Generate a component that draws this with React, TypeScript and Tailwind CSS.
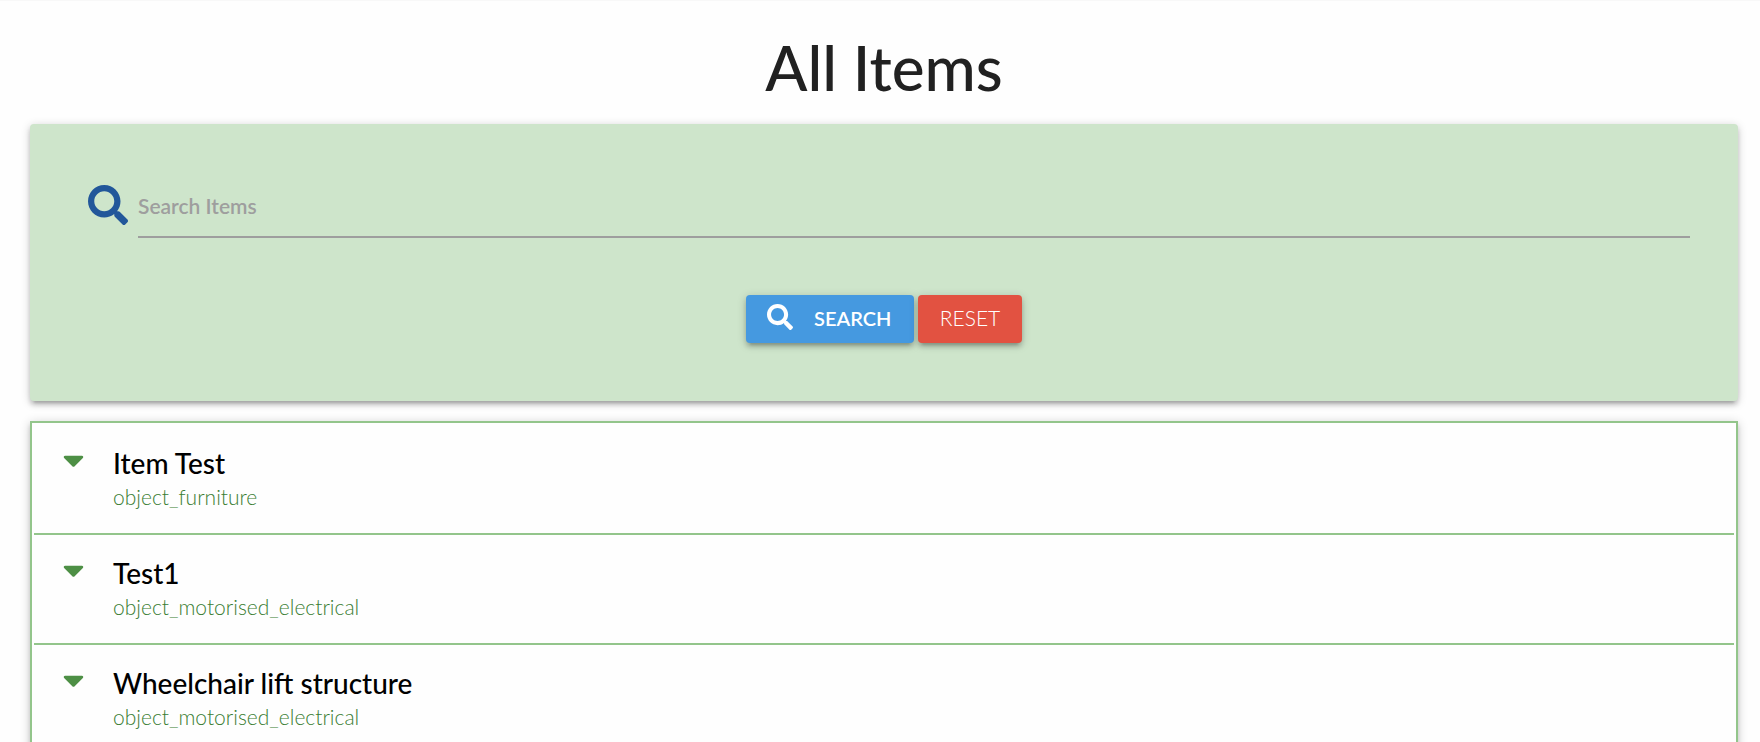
import { FaCaretDown, FaSearch } from "react-icons/fa";

const items = [
  { name: "Item Test", kind: "object_furniture" },
  { name: "Test1", kind: "object_motorised_electrical" },
  { name: "Wheelchair lift structure", kind: "object_motorised_electrical" },
];

const raised =
  "shadow-[0_4px_4px_0_rgba(0,0,0,0.14),0_6px_2px_-4px_rgba(0,0,0,0.12),0_2px_10px_0_rgba(0,0,0,0.2)]";

export default function App() {
  return (
    <div className="h-screen overflow-hidden border-t border-[#f8f8f8] bg-[#fefefe] pr-[22px] pl-[30px] font-['Lato','Open_Sans',sans-serif]">
      <h1 className="pt-[30px] pb-[21px] text-center text-[62px] leading-[72px] font-medium text-[#212121]">
        All Items
      </h1>

      <form
        onSubmit={(e) => e.preventDefault()}
        className={`rounded-[4px] bg-[#cee5cb] px-12 pt-[53px] pb-[58px] ${raised}`}
      >
        <div className="flex items-start pl-[10px]">
          <label htmlFor="search" aria-label="Search Items" className="pt-2 text-[#22579a]">
            <FaSearch size={40} />
          </label>
          <input
            id="search"
            type="text"
            placeholder="Search Items"
            className="ml-[10px] h-[61px] min-w-0 flex-1 border-b-2 border-[#9e9e9e] bg-transparent pb-[2px] text-[21px] font-semibold text-[#212121] outline-none placeholder:text-[#9e9e9e]"
          />
        </div>
        <div className="mt-[57px] flex justify-center gap-1">
          <button
            type="submit"
            className={`flex h-12 min-w-[168px] items-center gap-[21px] rounded-[4px] bg-[#4599e0] px-[21px] pb-1 text-xl font-semibold text-white ${raised}`}
          >
            <FaSearch size={26} />
            <span className="pt-[2px]">SEARCH</span>
          </button>
          <button
            type="reset"
            className={`h-12 min-w-[104px] rounded-[4px] bg-[#e25241] px-5 pb-[2px] text-[21px] font-light text-white ${raised}`}
          >
            RESET
          </button>
        </div>
      </form>

      <ul className={`mt-5 border-2 border-[#93c58b] p-[2px] ${raised}`}>
        {items.map((item) => (
          <li key={item.name} className="border-b-2 border-[#93c58b]">
            <button
              type="button"
              className="flex h-[108px] w-full items-start pt-[18px] pl-[29px] text-left"
            >
              <FaCaretDown size={34} className="w-[21px] shrink-0 text-[#4d8f45]" />
              <span className="ml-[29px] flex flex-col">
                <span className="text-[28px] leading-10 font-medium text-black">{item.name}</span>
                <span className="text-[21px] leading-7 font-light text-[#3a7d32]">{item.kind}</span>
              </span>
            </button>
          </li>
        ))}
      </ul>
    </div>
  );
}
